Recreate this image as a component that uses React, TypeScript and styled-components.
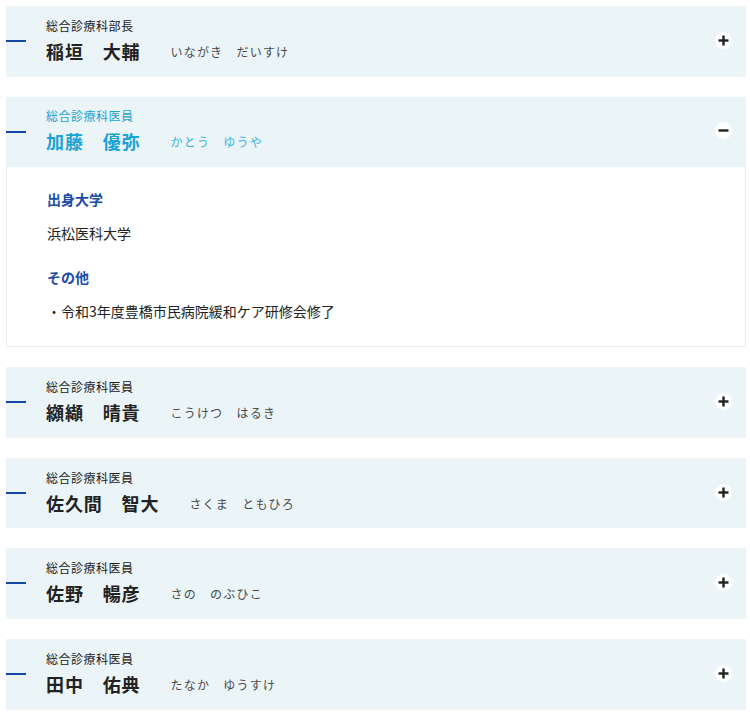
import React, { useState } from "react";
import styled, { createGlobalStyle } from "styled-components";

const GlobalStyle = createGlobalStyle`
  body {
    margin: 0;
    background: #fff;
    font-family: "Noto Sans CJK JP", "Noto Sans", sans-serif;
    color: #222;
  }
`;

interface Doctor {
  title: string;
  name: string;
  kana: string;
  school?: string;
  other?: string[];
}

const doctors: Doctor[] = [
  { title: "総合診療科部長", name: "稲垣　大輔", kana: "いながき　だいすけ" },
  {
    title: "総合診療科医員",
    name: "加藤　優弥",
    kana: "かとう　ゆうや",
    school: "浜松医科大学",
    other: ["令和3年度豊橋市民病院緩和ケア研修会修了"],
  },
  { title: "総合診療科医員", name: "纐纈　晴貴", kana: "こうけつ　はるき" },
  { title: "総合診療科医員", name: "佐久間　智大", kana: "さくま　ともひろ" },
  { title: "総合診療科医員", name: "佐野　暢彦", kana: "さの　のぶひこ" },
  { title: "総合診療科医員", name: "田中　佑典", kana: "たなか　ゆうすけ" },
];

const List = styled.div`
  display: flex;
  flex-direction: column;
  gap: 20px;
  padding: 6px 4px 6px 6px;
`;

const Item = styled.div``;

const Header = styled.button<{ $open: boolean }>`
  position: relative;
  display: flex;
  align-items: center;
  width: 100%;
  height: 70.6px;
  padding: 0 0 2px 40px;
  border: 0;
  background: #ebf4f7;
  cursor: pointer;
  text-align: left;
  font-family: inherit;
  color: ${(p) => (p.$open ? "#1aa3d4" : "#222")};

  &::before {
    content: "";
    position: absolute;
    left: 0;
    top: 34px;
    width: 20px;
    height: 2px;
    background: #1448a8;
  }
`;

const Info = styled.div`
  flex: 1;
  display: flex;
  flex-direction: column;
`;

const Role = styled.div`
  font-size: 12px;
  line-height: 18px;
  letter-spacing: 0.04em;
  margin-bottom: 3px;
`;

const NameRow = styled.div`
  display: flex;
  align-items: center;
`;

const Name = styled.span`
  font-size: 18px;
  font-weight: 700;
  line-height: 26px;
  letter-spacing: 0.05em;
  margin-right: 30px;
`;

const Kana = styled.span<{ $open: boolean }>`
  font-size: 12px;
  line-height: 18px;
  padding-top: 2px;
  letter-spacing: 0.1em;
  color: ${(p) => (p.$open ? "#3cb4df" : "#4a4a4a")};
`;

const Toggle = styled.span`
  width: 17px;
  height: 17px;
  margin-right: 14px;
  border-radius: 50%;
  background: #fff;
  display: flex;
  align-items: center;
  justify-content: center;
`;

const Body = styled.div`
  border: 1px solid #e3eef2;
  border-top: 0;
  padding: 22px 40px 24px 40px;
`;

const Heading = styled.h3`
  margin: 0 0 12px;
  font-size: 14px;
  line-height: 21px;
  font-weight: 700;
  color: #1a4da9;
`;

const Text = styled.p`
  margin: 0 0 23px;
  font-size: 14px;
  line-height: 22px;
  color: #222;
`;

const Bullets = styled.ul`
  margin: 0;
  padding: 0;
  list-style: none;
  font-size: 14px;
  line-height: 22px;

  li {
    height: 22px;
  }

  li::before {
    content: "・";
  }
`;

const Icon = ({ open }: { open: boolean }) => (
  <svg width="11" height="11" viewBox="0 0 11 11">
    <rect x="0.5" y="4.3" width="10" height="2.4" fill="#222" />
    {!open && <rect x="4.3" y="0.5" width="2.4" height="10" fill="#222" />}
  </svg>
);

export default function App() {
  const [openIdx, setOpenIdx] = useState<number | null>(1);
  return (
    <>
      <GlobalStyle />
      <List>
        {doctors.map((d, i) => {
          const open = openIdx === i;
          return (
            <Item key={d.name}>
              <Header $open={open} onClick={() => setOpenIdx(open ? null : i)}>
                <Info>
                  <Role>{d.title}</Role>
                  <NameRow>
                    <Name>{d.name}</Name>
                    <Kana $open={open}>{d.kana}</Kana>
                  </NameRow>
                </Info>
                <Toggle>
                  <Icon open={open} />
                </Toggle>
              </Header>
              {open && (
                <Body>
                  {d.school && (
                    <>
                      <Heading>出身大学</Heading>
                      <Text>{d.school}</Text>
                    </>
                  )}
                  {d.other && (
                    <>
                      <Heading>その他</Heading>
                      <Bullets>
                        {d.other.map((o) => (
                          <li key={o}>{o}</li>
                        ))}
                      </Bullets>
                    </>
                  )}
                </Body>
              )}
            </Item>
          );
        })}
      </List>
    </>
  );
}
